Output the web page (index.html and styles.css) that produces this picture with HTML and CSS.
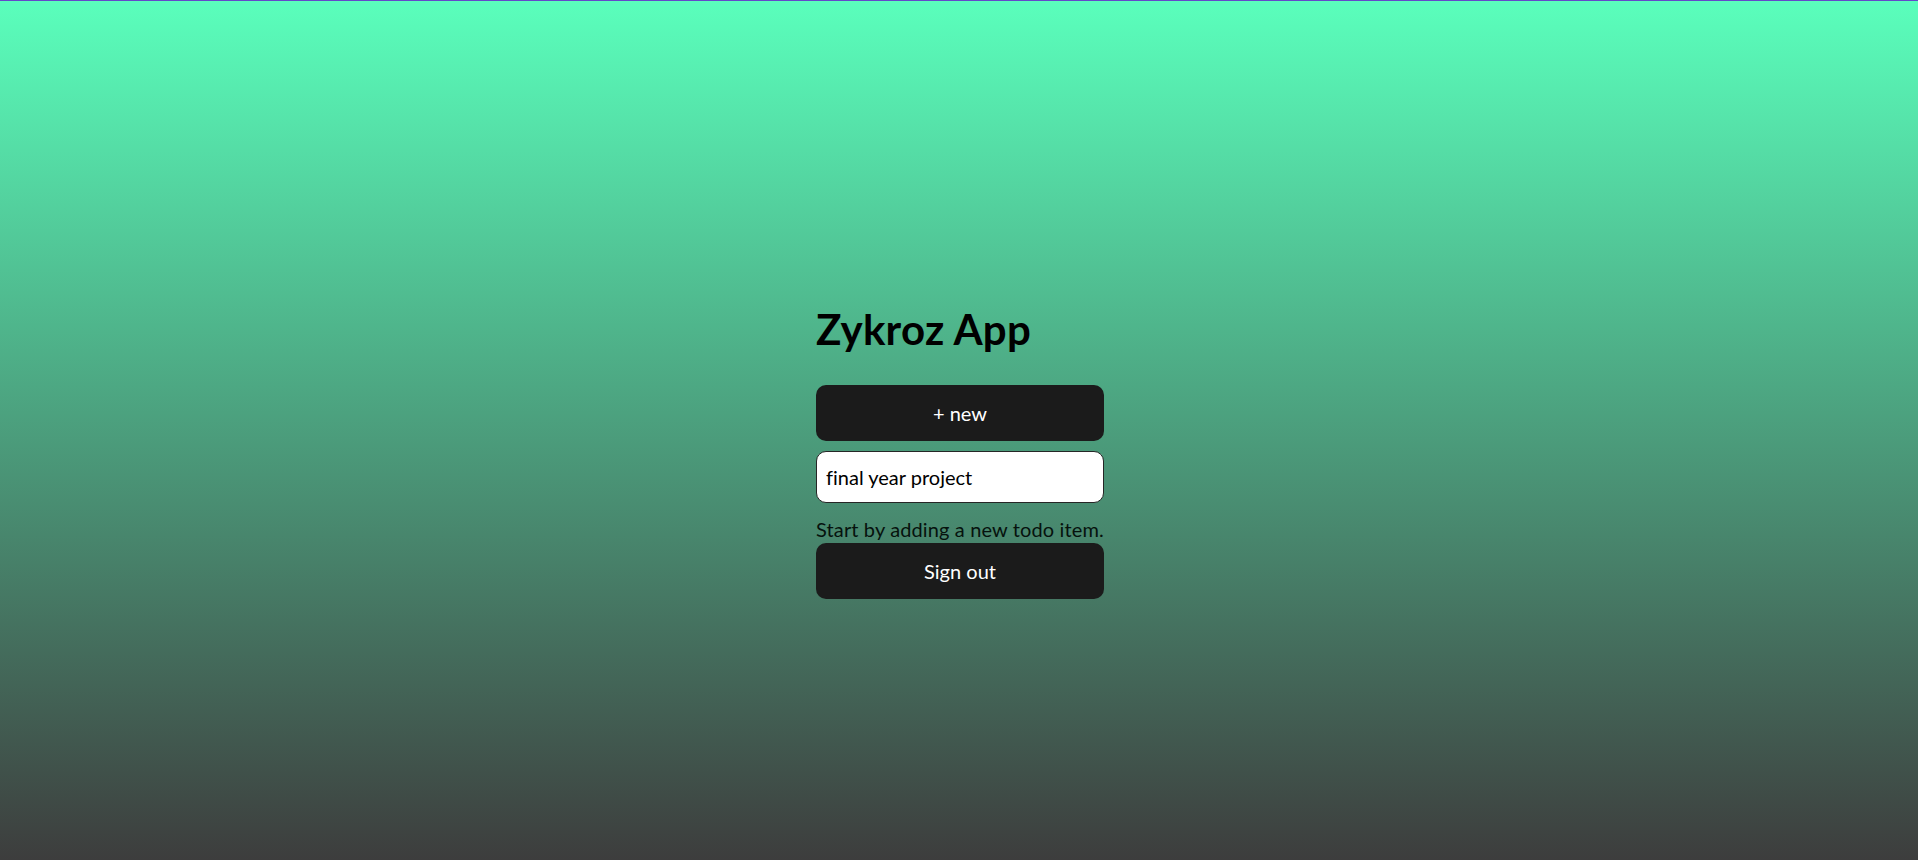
FILE: index.html
```html
<!DOCTYPE html>
<html lang="en">
<head>
<meta charset="utf-8">
<title>Zykroz App</title>
<link rel="stylesheet" href="styles.css">
</head>
<body>
<main class="page">
  <section class="panel">
    <h1 class="title">Zykroz App</h1>
    <button class="btn btn-new" type="button">+ new</button>
    <input class="todo-input" type="text" value="final year project">
    <p class="hint">Start by adding a new todo item.</p>
    <button class="btn btn-signout" type="button">Sign out</button>
  </section>
</main>
</body>
</html>
```
FILE: styles.css
```css
* { box-sizing: border-box; }
html, body { margin: 0; padding: 0; }
body {
  min-height: 100vh;
  border-top: 1px solid #6549c9;
  background: linear-gradient(to bottom, #5affbc 0%, #3d3d3d 100%);
  font-family: Lato, "Open Sans", sans-serif;
  font-variant-ligatures: none;
  color: #000;
}
.page {
  display: flex;
  justify-content: center;
  padding-top: 303px;
  padding-left: 2px;
}
.panel {
  width: 288px;
  display: flex;
  flex-direction: column;
}
.title {
  margin: 0;
  font-size: 42px;
  line-height: 50px;
  font-weight: 700;
  letter-spacing: 0.25px;
  color: #000;
  white-space: nowrap;
}
.btn {
  display: block;
  width: 100%;
  border: none;
  border-radius: 10px;
  background: #1b1b1b;
  color: #fff;
  font-family: inherit;
  font-variant-ligatures: none;
  font-size: 20px;
  line-height: 24px;
  padding: 0;
  cursor: pointer;
}
.btn-new {
  margin-top: 31px;
  height: 56px;
}
.todo-input {
  margin-top: 10px;
  height: 52px;
  width: 100%;
  border: 1px solid #262626;
  border-radius: 10px;
  background: #fff;
  padding: 0 9px;
  font-family: inherit;
  font-variant-ligatures: none;
  font-size: 20px;
  color: #000;
  outline: none;
}
.hint {
  margin: 14px 0 0;
  font-size: 20px;
  line-height: 24px;
  letter-spacing: 0.13px;
  color: #06120d;
  white-space: nowrap;
}
.btn-signout {
  margin-top: 2px;
  height: 56px;
}
```
